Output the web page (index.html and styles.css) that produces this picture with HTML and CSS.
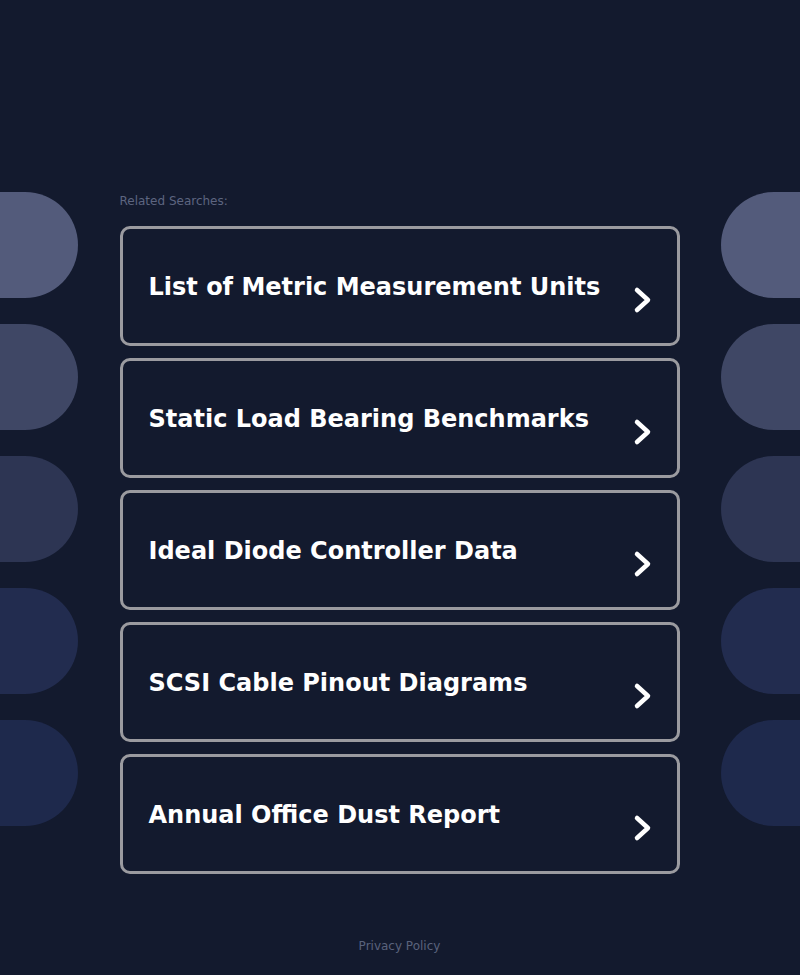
FILE: index.html
```html
<!DOCTYPE html>
<html lang="en">
<head>
<meta charset="utf-8">
<title>Related Searches</title>
<link rel="stylesheet" href="styles.css">
</head>
<body>
<div class="page">
  <div class="decor decor-left">
    <div class="blob b1"></div>
    <div class="blob b2"></div>
    <div class="blob b3"></div>
    <div class="blob b4"></div>
    <div class="blob b5"></div>
  </div>
  <main class="main">
    <div class="label">Related Searches:</div>
    <ul class="links">
      <li><a class="card" href="#"><span class="card-text">List of Metric Measurement Units</span><svg class="chev" viewBox="0 0 20 28" width="20" height="28"><path d="M4 4 L15 14 L4 24" fill="none" stroke="#fff" stroke-width="4.5" stroke-linecap="round" stroke-linejoin="round"/></svg></a></li>
      <li><a class="card" href="#"><span class="card-text">Static Load Bearing Benchmarks</span><svg class="chev" viewBox="0 0 20 28" width="20" height="28"><path d="M4 4 L15 14 L4 24" fill="none" stroke="#fff" stroke-width="4.5" stroke-linecap="round" stroke-linejoin="round"/></svg></a></li>
      <li><a class="card" href="#"><span class="card-text">Ideal Diode Controller Data</span><svg class="chev" viewBox="0 0 20 28" width="20" height="28"><path d="M4 4 L15 14 L4 24" fill="none" stroke="#fff" stroke-width="4.5" stroke-linecap="round" stroke-linejoin="round"/></svg></a></li>
      <li><a class="card" href="#"><span class="card-text">SCSI Cable Pinout Diagrams</span><svg class="chev" viewBox="0 0 20 28" width="20" height="28"><path d="M4 4 L15 14 L4 24" fill="none" stroke="#fff" stroke-width="4.5" stroke-linecap="round" stroke-linejoin="round"/></svg></a></li>
      <li><a class="card" href="#"><span class="card-text">Annual Office Dust Report</span><svg class="chev" viewBox="0 0 20 28" width="20" height="28"><path d="M4 4 L15 14 L4 24" fill="none" stroke="#fff" stroke-width="4.5" stroke-linecap="round" stroke-linejoin="round"/></svg></a></li>
    </ul>
    <footer class="footer"><a href="#" class="privacy">Privacy Policy</a></footer>
  </main>
  <div class="decor decor-right">
    <div class="blob b1"></div>
    <div class="blob b2"></div>
    <div class="blob b3"></div>
    <div class="blob b4"></div>
    <div class="blob b5"></div>
  </div>
</div>
</body>
</html>
```

FILE: styles.css
```css
html, body {
  margin: 0;
  padding: 0;
  background: #131a2e;
  height: 100%;
}
body {
  font-family: "DejaVu Sans", "Liberation Sans", sans-serif;
  color: #fff;
}
.page {
  display: grid;
  grid-template-columns: 78px 560px 79px;
  justify-content: space-between;
  width: 800px;
  min-height: 975px;
}
.decor {
  display: flex;
  flex-direction: column;
  gap: 26px;
  padding-top: 192px;
}
.blob {
  height: 106px;
}
.decor-left .blob { border-radius: 0 53px 53px 0; }
.decor-right .blob { border-radius: 53px 0 0 53px; }
.b1 { background: #535b7b; }
.b2 { background: #3f4765; }
.b3 { background: #2d3553; }
.b4 { background: #222c4f; }
.b5 { background: #1e294c; }

.main {
  display: flex;
  flex-direction: column;
  padding-top: 193px;
}
.label {
  font-family: "DejaVu Sans", sans-serif;
  font-size: 12px;
  line-height: 16px;
  color: #5d6580;
  margin-bottom: 17px;
}
.links {
  list-style: none;
  margin: 0;
  padding: 0;
  display: flex;
  flex-direction: column;
  gap: 12px;
}
.card {
  display: flex;
  align-items: center;
  justify-content: space-between;
  box-sizing: border-box;
  height: 120px;
  border: 3px solid #9b9ba0;
  border-radius: 10px;
  padding: 0 24px 0 26px;
  text-decoration: none;
  color: #fff;
}
.card-text {
  font-weight: bold;
  font-size: 24px;
  margin-top: 2px;
}
.chev {
  flex: none;
  margin-top: 27px;
}
.footer {
  text-align: center;
  margin-top: 61px;
}
.privacy {
  font-size: 12px;
  color: #5a627c;
  text-decoration: none;
}
```
